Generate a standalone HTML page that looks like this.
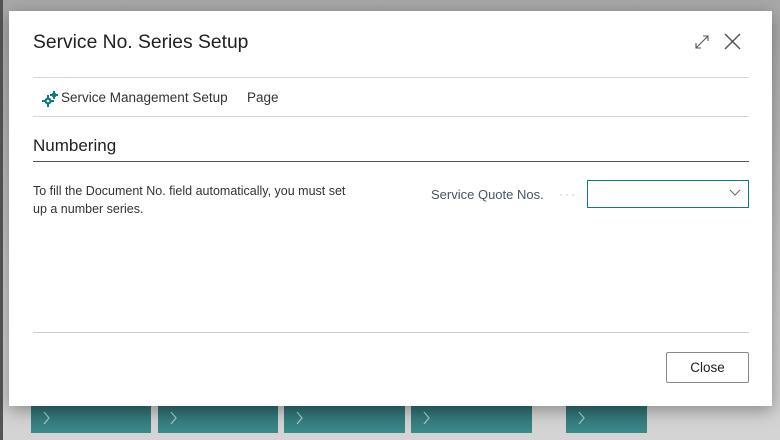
<!DOCTYPE html>
<html><head><style>
*{margin:0;padding:0;box-sizing:border-box}
body{width:780px;height:440px;overflow:hidden;background:linear-gradient(#a8a8a8,#c8c8c8 60%,#d4d4d4);font-family:"Segoe UI","Liberation Sans",sans-serif;position:relative}
.edge{position:absolute;left:0;top:0;width:3px;height:440px;background:#555}
.tile{position:absolute;top:406px;height:27px;background:linear-gradient(#2f6d6f,#3a8a8c)}
.tile svg{position:absolute;left:12px;top:5px}
.dlg{position:absolute;left:9px;top:11px;width:763px;height:395px;background:#fff;box-shadow:0 4px 16px rgba(0,0,0,.35)}
.t{position:absolute;left:24px;top:21px;font-size:19.3px;color:#212121}
.hr{position:absolute;left:24px;width:716px;height:1px;background:#d6d6d6}
.a{position:absolute;top:79px;font-size:13.5px;color:#333}
.num{position:absolute;left:24px;top:125px;font-size:17px;color:#212121}
.p{position:absolute;left:24px;top:171px;font-size:12.5px;color:#333;line-height:18px;width:380px;white-space:nowrap}
.lbl{position:absolute;left:422px;top:176px;font-size:13px;color:#44556a}
.dots{position:absolute;left:550px;top:176px;font-size:12px;color:#bbb;letter-spacing:2px}
.inp{position:absolute;left:578px;top:169px;width:162px;height:28px;border:1px solid #0f7b7f}
.btn{position:absolute;left:657px;top:341px;width:83px;height:31px;border:1px solid #8a8a8a;border-radius:2px;font-size:13.5px;color:#212121;text-align:center;line-height:29px}
</style></head><body>
<div class="edge"></div>
<div class="tile" style="left:31px;width:120px"><svg width="8" height="14" viewBox="0 0 8 14" fill="none" stroke="#9fc6c7" stroke-width="1.3"><path d="M1 1l5 6-5 6"/></svg></div>
<div class="tile" style="left:158px;width:120px"><svg width="8" height="14" viewBox="0 0 8 14" fill="none" stroke="#9fc6c7" stroke-width="1.3"><path d="M1 1l5 6-5 6"/></svg></div>
<div class="tile" style="left:284px;width:121px"><svg width="8" height="14" viewBox="0 0 8 14" fill="none" stroke="#9fc6c7" stroke-width="1.3"><path d="M1 1l5 6-5 6"/></svg></div>
<div class="tile" style="left:411px;width:121px"><svg width="8" height="14" viewBox="0 0 8 14" fill="none" stroke="#9fc6c7" stroke-width="1.3"><path d="M1 1l5 6-5 6"/></svg></div>
<div class="tile" style="left:566px;width:81px"><svg width="8" height="14" viewBox="0 0 8 14" fill="none" stroke="#9fc6c7" stroke-width="1.3"><path d="M1 1l5 6-5 6"/></svg></div>
<div class="dlg">
<div class="t">Service No. Series Setup</div>
<svg style="position:absolute;left:684px;top:22px" width="18" height="18" viewBox="0 0 18 18" fill="none" stroke="#555" stroke-width="1.1"><path d="M3 15L15 3M10 3h5v5M3 10v5h5"/></svg>
<svg style="position:absolute;left:714px;top:21px" width="19" height="19" viewBox="0 0 19 19" fill="none" stroke="#555" stroke-width="1.5"><path d="M2 2L17 17M17 2L2 17"/></svg>
<div class="hr" style="top:66px"></div>
<svg style="position:absolute;left:33px;top:80px" width="16" height="16" viewBox="0 0 16 16" fill="#0f7b7f"><circle cx="6" cy="10" r="3.5"/><circle cx="12" cy="4" r="2.5"/><path d="M5 4h2v12H5zM0 9h12v2H0zM11 0h2v8h-2zM8 3h8v2H8z"/><circle cx="6" cy="10" r="1.3" fill="#fff"/></svg>
<div class="a" style="left:52px">Service Management Setup</div>
<div class="a" style="left:238px">Page</div>
<div class="hr" style="top:105px"></div>
<div class="num">Numbering</div>
<div class="hr" style="top:150px;background:#555"></div>
<div class="p">To fill the Document No. field automatically, you must set<br>up a number series.</div>
<div class="lbl">Service Quote Nos.</div>
<div class="dots">···</div>
<div class="inp"><svg style="position:absolute;right:7px;top:8px" width="12" height="8" viewBox="0 0 12 8" fill="none" stroke="#666" stroke-width="1"><path d="M1 1l5 5 5-5"/></svg></div>
<div class="hr" style="top:321px;background:#ccc"></div>
<div class="btn">Close</div>
</div>
</body></html>
